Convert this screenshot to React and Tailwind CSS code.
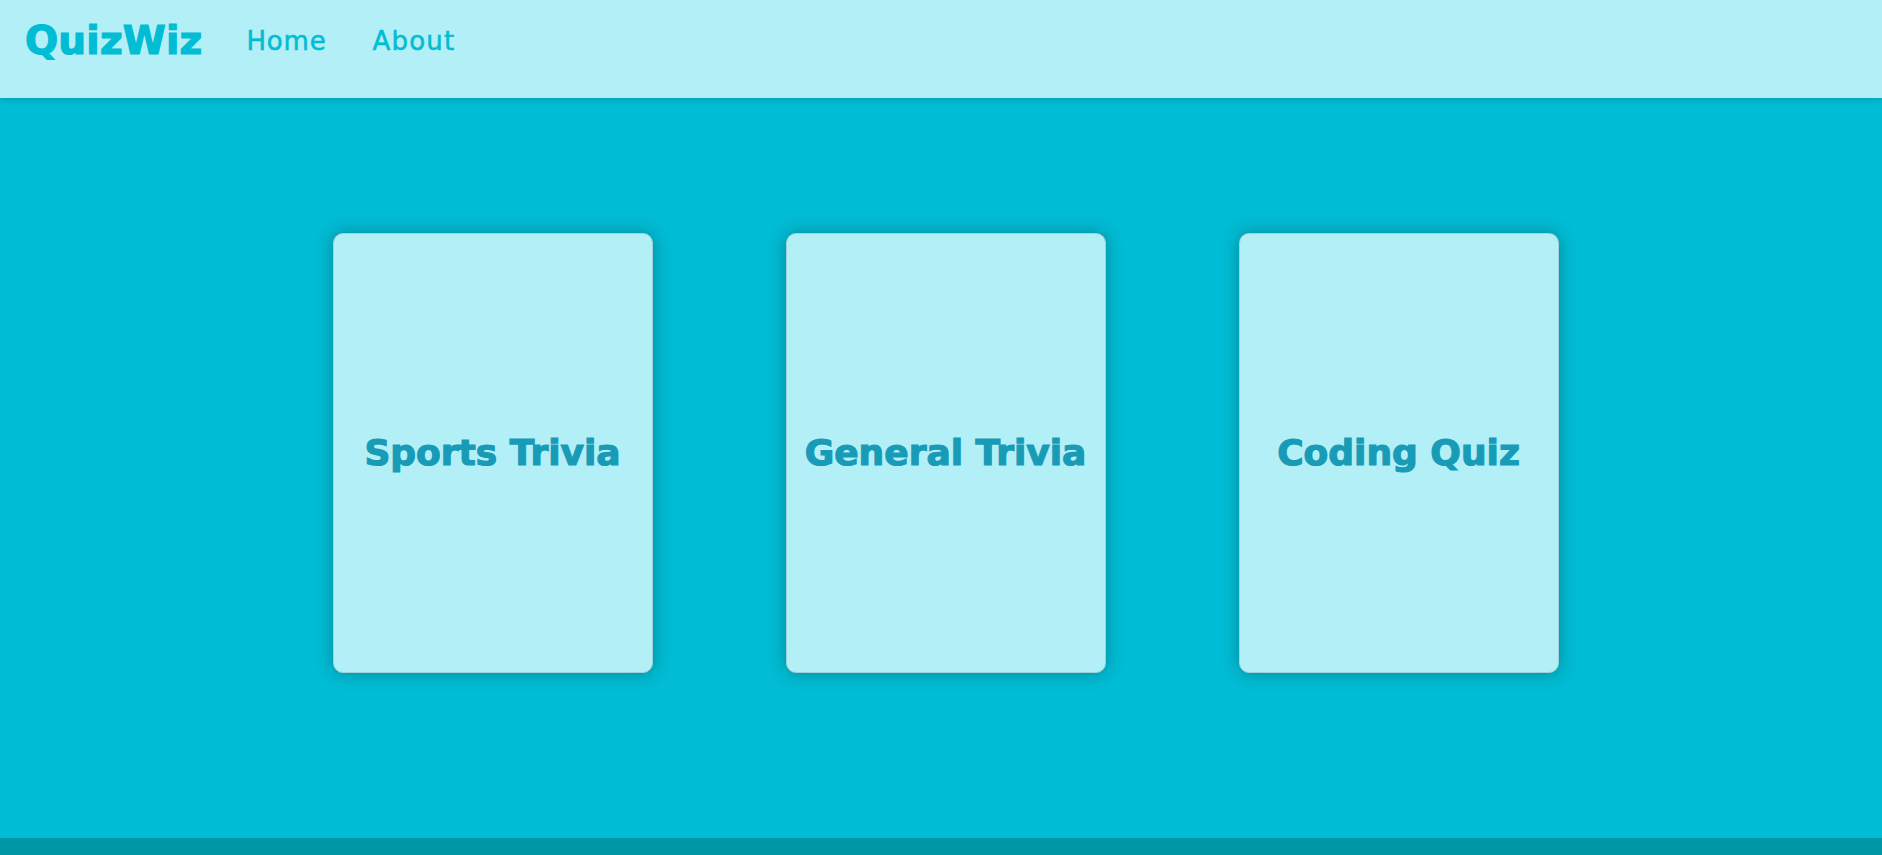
import React from "react";

const font = { fontFamily: '"DejaVu Sans", "Liberation Sans", sans-serif' };

function Card({ title }) {
  return (
    <div className="w-[320px] h-[440px] rounded-[10px] bg-[#b3eff6] border border-[#9fd3da] shadow-[0_0_18px_rgba(0,0,0,0.28)] flex items-center justify-center">
      <h2 className="text-[36px] font-bold text-[#189bb6] tracking-[0px] [-webkit-text-stroke:1.2px_#189bb6]">{title}</h2>
    </div>
  );
}

export default function App() {
  return (
    <div className="min-h-[855px] bg-[#00bcd4] flex flex-col overflow-hidden" style={font}>
      <header className="h-[98px] bg-[#b3eff6] flex items-center pl-[25px] pb-[18px] shadow-[0_2px_6px_rgba(0,0,0,0.15)] relative z-10">
        <span className="text-[39px] font-bold text-[#00bcd4] tracking-[0.2px] leading-none [-webkit-text-stroke:1.2px_#00bcd4]">QuizWiz</span>
        <nav className="flex items-center gap-[46px] ml-[44px] pt-[2px]">
          <a className="text-[26px] text-[#00bcd4] tracking-[0.8px] leading-none [-webkit-text-stroke:0.5px_#00bcd4]">Home</a>
          <a className="text-[26px] text-[#00bcd4] tracking-[1.2px] leading-none [-webkit-text-stroke:0.5px_#00bcd4]">About</a>
        </nav>
      </header>
      <main className="h-[740px] flex justify-center items-start gap-[133px] pt-[135px] pl-[9px]">
        <Card title="Sports Trivia" />
        <Card title="General Trivia" />
        <Card title="Coding Quiz" />
      </main>
      <footer className="h-[40px] bg-[#0097a7]"></footer>
    </div>
  );
}
